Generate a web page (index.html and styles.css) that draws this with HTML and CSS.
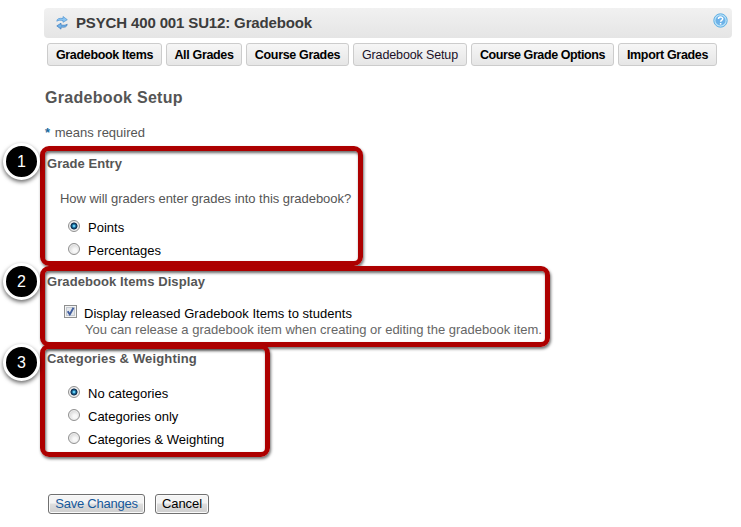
FILE: index.html
```html
<!DOCTYPE html>
<html lang="en">
<head>
<meta charset="utf-8">
<title>Gradebook Setup</title>
<link rel="stylesheet" href="styles.css">
</head>
<body>
<main class="page">
  <header class="tool-header">
    <svg class="reload" width="12" height="14" viewBox="0 0 12 14">
      <path d="M.8 5.200C1 2.700 3 1.900 7 2.500V.5l4.300 3.200L7 6.300V4.600C4 4 2.400 4.200.8 5.200z" fill="#8cc6f2" stroke="#4f93d2" stroke-width=".7"/>
      <path d="M11.200 8.300c-.2 2.600-2.200 3.300-6.200 2.800v2L.8 9.900 5 7.200V9c3 .5 4.600.3 6.200-.7z" fill="#72b4ea" stroke="#3b77b8" stroke-width=".7"/>
    </svg>
    <h1 class="tool-title">PSYCH 400 001 SU12: Gradebook</h1>
    <svg class="help" width="15" height="15" viewBox="0 0 15 15">
      <circle cx="7.500" cy="7.500" r="6.700" fill="#b9e2f8" stroke="#5faee3"/>
      <circle cx="7.500" cy="7.500" r="5" fill="#6db2e8"/>
      <path d="M5.500 6c0-2.600 4.200-2.500 4.200-.2 0 1.500-2.100 1.500-2.100 3M7.600 10v1.400" fill="none" stroke="#fff" stroke-width="1.500"/>
    </svg>
  </header>
  <nav class="tabs">
    <a class="tab w115">Gradebook Items</a>
    <a class="tab w76">All Grades</a>
    <a class="tab w103">Course Grades</a>
    <a class="tab w114 current">Gradebook Setup</a>
    <a class="tab w143 tight">Course Grade Options</a>
    <a class="tab w99">Import Grades</a>
  </nav>
  <h2 class="heading">Gradebook Setup</h2>
  <p class="required"><span class="star">*</span> means required</p>

  <section class="box entry">
    <span class="badge">1</span>
    <h3 class="legend">Grade Entry</h3>
    <p class="question">How will graders enter grades into this gradebook?</p>
    <label class="option"><span class="radio on"></span>Points</label>
    <label class="option"><span class="radio"></span>Percentages</label>
  </section>
  <section class="box display">
    <span class="badge">2</span>
    <h3 class="legend wide">Gradebook Items Display</h3>
    <label class="check-row">
      <svg class="check" width="13" height="13" viewBox="0 0 13 13">
        <rect x=".5" y=".5" width="12" height="12" fill="#f4f4f4" stroke="#8e8f8f"/>
        <rect x="2.500" y="2.500" width="8" height="8" fill="#e3e6ea" stroke="#c3c9d0"/>
        <path d="M3.700 6.200l2.100 3.200 3.700-6.600" fill="none" stroke="#405d9e" stroke-width="1.900"/>
      </svg>Display released Gradebook Items to students</label>
    <p class="hint">You can release a gradebook item when creating or editing the gradebook item.</p>
  </section>
  <section class="box categories">
    <span class="badge">3</span>
    <h3 class="legend wider">Categories &amp; Weighting</h3>
    <div class="options">
      <label class="option"><span class="radio on"></span>No categories</label>
      <label class="option"><span class="radio"></span>Categories only</label>
      <label class="option"><span class="radio"></span>Categories &amp; Weighting</label>
    </div>
  </section>

  <div class="actions">
    <button class="btn save">Save Changes</button>
    <button class="btn cancel">Cancel</button>
  </div>
</main>
</body>
</html>
```
FILE: styles.css
```css
* { box-sizing: border-box; }
body { margin: 0; background: #fff; color: #000; font: 13px/15px "Liberation Sans", Arial, sans-serif; }
h1, h2, h3, p { margin: 0; }
.page { width: 741px; height: 527px; padding: 8px 9px 0 40px; overflow: hidden; white-space: nowrap; }

.tool-header { display: flex; height: 30px; margin-left: 4px; padding: 0 4px 0 12px; border-radius: 4px; background: linear-gradient(#f1f1f1, #e5e5e5); }
.reload { margin-top: 8px; }
.tool-title { margin: 6px auto 0 8px; font-size: 15px; line-height: 17px; letter-spacing: -.14px; color: #3c3c3c; }
.help { margin-top: 5px; }

.tabs { display: flex; gap: 4px; margin: 5px 0 0 7px; }
.tab { height: 23px; border: 1px solid #ccc; border-radius: 3px; background: linear-gradient(#f6f6f6, #e6e6e6); font-size: 12.5px; font-weight: bold; line-height: 22px; letter-spacing: -.33px; text-align: center; }
.current { font-weight: normal; letter-spacing: -.13px; color: #201028; }
.tight { letter-spacing: -.41px; }
.w115 { width: 115px; }
.w76 { width: 76px; }
.w103 { width: 103px; }
.w114 { width: 114px; }
.w143 { width: 143px; }
.w99 { width: 99px; }

.heading { margin: 23px 0 0 5px; font-size: 16px; line-height: 18px; letter-spacing: .3px; color: #555; }
.required { margin: 18px 0 0 5px; color: #555; }
.star { margin-right: 1px; font-weight: bold; color: #1b6a9c; }

.box { position: relative; border: 5px solid #ad0000; border-radius: 9px; box-shadow: 1px 2px 3px rgba(0, 0, 0, .55), inset 1px 2px 3px rgba(0, 0, 0, .6); }
.entry { width: 323px; height: 120px; margin-top: 6px; padding: 5px 0 0 2px; }
.display { width: 510px; height: 81px; padding: 3px 0 0 2px; }
.categories { width: 230px; height: 113px; margin-top: -3px; padding: 2px 0 0 2px; }
.badge { position: absolute; left: -42px; top: -6px; width: 37px; height: 37px; border: 3px solid #fff; border-radius: 50%; background: #000; color: #fff; font-size: 16px; line-height: 31px; text-align: center; box-shadow: 0 2px 4px rgba(0, 0, 0, .6); }
.entry .badge { top: -8px; }
.display .badge { top: -8px; }
.categories .badge { top: -5px; }

.legend { font-size: 13px; line-height: 15px; letter-spacing: .05px; color: #555; }
.wide { letter-spacing: .085px; }
.wider { letter-spacing: .16px; }
.question { margin: 20px 0 10px 13px; letter-spacing: -.03px; color: #555; }
.option { display: flex; gap: 8px; height: 23px; margin-left: 21px; padding-top: 4px; }
.options { margin-top: 16px; }
.radio { flex: none; width: 12px; height: 12px; border: 1px solid #919191; border-radius: 50%; background: radial-gradient(circle at 60% 65%, #f8f8f8 0 20%, #c4c4c4 100%); box-shadow: inset 0 0 0 1px #eee; }
.on { background: radial-gradient(circle, #65cdf3 0 10%, #176a98 25%, #0b2545 44%, #eee 55%); }
.check-row { display: flex; gap: 7px; margin: 16px 0 0 17px; line-height: 17px; letter-spacing: .03px; }
.check { display: block; flex: none; }
.hint { margin-left: 38px; color: #666; }

.actions { display: flex; gap: 10px; margin: 37px 0 0 8px; }
.btn { height: 20px; padding: 0; border: 1px solid #707070; border-radius: 3px; background: linear-gradient(#f4f4f4 0 45%, #dedede 50%, #cecece); box-shadow: inset 0 0 0 1px #fafafa; font: 13px/18px "Liberation Sans", Arial, sans-serif; }
.save { width: 97px; color: #16589a; letter-spacing: -.25px; }
.cancel { width: 54px; letter-spacing: -.08px; }
```
